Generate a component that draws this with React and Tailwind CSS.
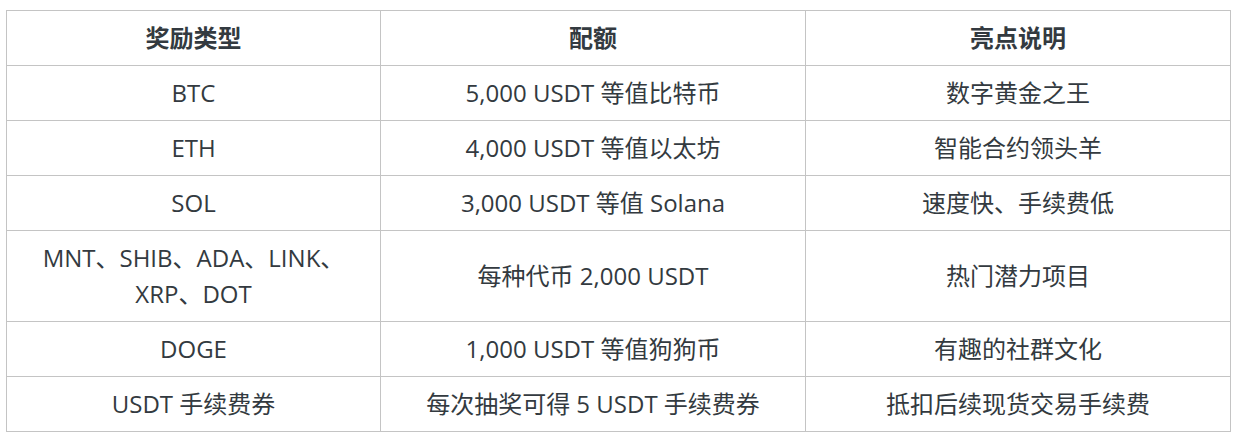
const rows = [
  ['BTC', '5,000 USDT 等值比特币', '数字黄金之王'],
  ['ETH', '4,000 USDT 等值以太坊', '智能合约领头羊'],
  ['SOL', '3,000 USDT 等值 Solana', '速度快、手续费低'],
  ['MNT、SHIB、ADA、LINK、XRP、DOT', '每种代币 2,000 USDT', '热门潜力项目'],
  ['DOGE', '1,000 USDT 等值狗狗币', '有趣的社群文化'],
  ['USDT 手续费券', '每次抽奖可得 5 USDT 手续费券', '抵扣后续现货交易手续费'],
];

const App = () => {
  return (
    <div className="bg-white min-h-screen pt-[10px] pl-[6px] font-['Open_Sans','Noto_Sans_CJK_SC',sans-serif] text-[#333a40]">
      <table className="border-collapse text-[24px] leading-[36px] text-center">
        <thead>
          <tr>
            <th className="w-[374px] border border-[#c4c4c4] px-4 py-[9px] font-bold">奖励类型</th>
            <th className="w-[425px] border border-[#c4c4c4] px-4 py-[9px] font-bold">配额</th>
            <th className="w-[425px] border border-[#c4c4c4] px-4 py-[9px] font-bold">亮点说明</th>
          </tr>
        </thead>
        <tbody>
          {rows.map((row) => (
            <tr key={row[0]}>
              {row.map((cell, i) => (
                <td key={i} className="border border-[#c4c4c4] px-4 py-[9px]">
                  {cell}
                </td>
              ))}
            </tr>
          ))}
        </tbody>
      </table>
    </div>
  );
};

export default App;
